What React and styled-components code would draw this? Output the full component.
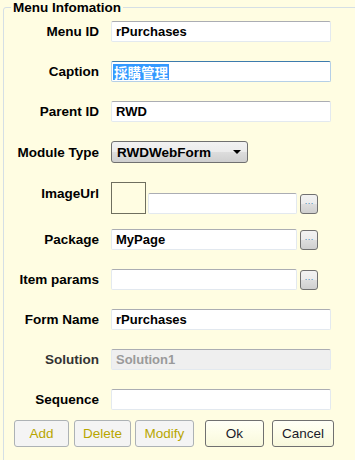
import React from 'react';
import styled, { createGlobalStyle } from 'styled-components';

const GlobalStyle = createGlobalStyle`
  html, body {
    margin: 0;
    padding: 0;
    background: #fffde2;
    overflow: hidden;
  }
  body {
    font-family: "Liberation Sans", Arial, sans-serif;
    font-size: 13px;
    color: #000;
  }
`;

const Page = styled.div`
  width: 355px;
  height: 460px;
  overflow: hidden;
  background: #fffde2;
`;

const Group = styled.fieldset`
  margin: 0 0 0 3px;
  padding: 0;
  width: 380px;
  height: 470px;
  border: 1px solid #d5dfe5;
  border-radius: 3px;
  box-sizing: border-box;
`;

const Legend = styled.legend`
  margin-left: 7px;
  padding: 0 2px;
  font-weight: bold;
  font-size: 13.5px;
  line-height: 15px;
`;

const Form = styled.div`
  display: flex;
  flex-direction: column;
`;

const Row = styled.div`
  display: flex;
  align-items: ${({ $top }) => ($top ? 'flex-start' : 'center')};
  margin-top: ${({ $gap }) => $gap}px;
`;

const Label = styled.div`
  width: 95px;
  margin-right: 12px;
  margin-top: ${({ $offset }) => $offset || 0}px;
  text-align: right;
  font-weight: bold;
  font-size: 13.5px;
  line-height: 15px;
  color: ${({ $muted }) => ($muted ? '#333' : '#000')};
  white-space: nowrap;
`;

const TextBox = styled.div`
  box-sizing: border-box;
  width: ${({ $w }) => $w}px;
  height: 21px;
  padding: 0 4px;
  display: flex;
  align-items: center;
  background: ${({ $disabled }) => ($disabled ? '#efefef' : '#fff')};
  border: 1px solid ${({ $focus }) => ($focus ? '#b5cfe7' : '#e3e9ef')};
  border-top-color: ${({ $focus }) => ($focus ? '#3d7bad' : '#abadb3')};
  border-radius: 2px;
  font-weight: bold;
  color: ${({ $disabled }) => ($disabled ? '#9a9a9a' : '#000')};
  white-space: nowrap;
  overflow: hidden;
`;

const Selected = styled.span`
  background: #3399ff;
  color: #fff;
  font-family: "Noto Sans CJK TC", "Noto Sans CJK SC", sans-serif;
  font-weight: bold;
  font-size: 13.5px;
  line-height: 16px;
  padding: 0 1px;
  margin-left: -3px;
`;

const Select = styled.div`
  box-sizing: border-box;
  width: 137px;
  height: 22px;
  padding: 0 6px 0 5px;
  display: flex;
  align-items: center;
  justify-content: space-between;
  border: 1px solid #707070;
  border-radius: 3px;
  background: linear-gradient(#f2f2f2 0%, #ebebeb 50%, #dddddd 51%, #cfcfcf 100%);
  font-weight: bold;
  font-size: 13.5px;
`;

const Arrow = styled.span`
  width: 0;
  height: 0;
  border-left: 4px solid transparent;
  border-right: 4px solid transparent;
  border-top: 4px solid #000;
`;

const ImageBox = styled.div`
  box-sizing: border-box;
  width: 35px;
  height: 32px;
  border: 1px solid #6f6f5f;
  background: #fffde2;
  margin-right: 2px;
`;

const ImageInputs = styled.div`
  display: flex;
  align-items: center;
  margin-top: 11px;
`;

const Ellipsis = styled.div`
  box-sizing: border-box;
  width: 18px;
  height: 20px;
  margin-left: 3px;
  border: 1px solid #707070;
  border-radius: 3px;
  background: linear-gradient(#f2f2f2 0%, #ebebeb 50%, #dddddd 51%, #cfcfcf 100%);
  display: flex;
  align-items: center;
  justify-content: center;
  font-size: 9px;
  color: #3c7fb1;
  line-height: 1;
`;

const Buttons = styled.div`
  display: flex;
  margin: 10px 0 0 10px;
`;

const Button = styled.div`
  box-sizing: border-box;
  width: ${({ $w }) => $w}px;
  height: 27px;
  margin-right: ${({ $gap }) => $gap || 0}px;
  display: flex;
  align-items: center;
  justify-content: center;
  font-size: 13.5px;
  border: 1px solid ${({ $disabled }) => ($disabled ? '#adb2b5' : '#707070')};
  border-radius: 3px;
  background: ${({ $disabled }) =>
    $disabled ? '#f4f4f4' : 'linear-gradient(#fffff6 0%, #fdfde8 50%, #f8f8dc 100%)'};
  color: ${({ $disabled }) => ($disabled ? '#b8a600' : '#1a1a2a')};
`;

const Field = ({ label, children, gap = 19, muted }) => (
  <Row $gap={gap}>
    <Label $muted={muted}>{label}</Label>
    {children}
  </Row>
);

export default function App() {
  return (
    <Page>
      <GlobalStyle />
      <Group>
        <Legend>Menu Infomation</Legend>
        <Form>
          <Field label="Menu ID" gap={6}>
            <TextBox $w={220}>rPurchases</TextBox>
          </Field>
          <Field label="Caption">
            <TextBox $w={220} $focus>
              <Selected>採購管理</Selected>
            </TextBox>
          </Field>
          <Field label="Parent ID">
            <TextBox $w={220}>RWD</TextBox>
          </Field>
          <Field label="Module Type">
            <Select>
              RWDWebForm
              <Arrow />
            </Select>
          </Field>
          <Row $gap={19} $top>
            <Label $offset={4}>ImageUrl</Label>
            <ImageBox />
            <ImageInputs>
              <TextBox $w={149} />
              <Ellipsis>···</Ellipsis>
            </ImageInputs>
          </Row>
          <Field label="Package" gap={15}>
            <TextBox $w={186}>MyPage</TextBox>
            <Ellipsis>···</Ellipsis>
          </Field>
          <Field label="Item params">
            <TextBox $w={186} />
            <Ellipsis>···</Ellipsis>
          </Field>
          <Field label="Form Name">
            <TextBox $w={220}>rPurchases</TextBox>
          </Field>
          <Field label="Solution" muted>
            <TextBox $w={220} $disabled>Solution1</TextBox>
          </Field>
          <Field label="Sequence">
            <TextBox $w={220} />
          </Field>
          <Buttons>
            <Button $w={55} $gap={5} $disabled>Add</Button>
            <Button $w={57} $gap={4} $disabled>Delete</Button>
            <Button $w={59} $gap={11} $disabled>Modify</Button>
            <Button $w={59} $gap={8}>Ok</Button>
            <Button $w={62}>Cancel</Button>
          </Buttons>
        </Form>
      </Group>
    </Page>
  );
}
